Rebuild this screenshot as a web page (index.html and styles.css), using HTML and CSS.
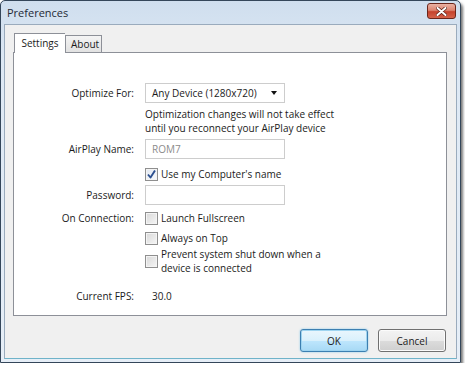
FILE: index.html
```html
<!DOCTYPE html>
<html>
  <head>
    <title>Preferences</title>
    <link rel="stylesheet" href="styles.css">
  </head>
  <body>
    <div class="window">
      <div class="titlebar">
        <span class="title">Preferences</span>
        <button class="close" title="Close">
          <svg width="11" height="9" viewBox="0 0 11 9">
            <path d="M1.5 1 L9.5 8 M9.5 1 L1.5 8" stroke="#5a1e14" stroke-width="3.4" stroke-linecap="round"/>
            <path d="M1.5 1 L9.5 8 M9.5 1 L1.5 8" stroke="#ffffff" stroke-width="2" stroke-linecap="round"/>
          </svg>
        </button>
      </div>

      <div class="client">
        <div class="tabs">
          <div class="tab active">Settings</div>
          <div class="tab">About</div>
        </div>

        <div class="panel">
          <div class="row r-select">
            <span class="label">Optimize For:</span>
            <div class="select">
              <span>Any Device (1280x720)</span>
              <span class="arrow"></span>
            </div>
          </div>

          <div class="row r-note">
            <span></span>
            <p class="note">Optimization changes will not take effect<br>until you reconnect your AirPlay device</p>
          </div>

          <div class="row r-name">
            <span class="label">AirPlay Name:</span>
            <div class="input disabled">ROM7</div>
          </div>

          <div class="row r-use">
            <span></span>
            <label class="check">
              <span class="box checked">
                <svg width="11" height="11" viewBox="0 0 11 11">
                  <path d="M2 5.5 L4.5 8.5 L9 1.5" fill="none" stroke="#2c4f8f" stroke-width="1.9" stroke-linejoin="round"/>
                </svg>
              </span>
              Use my Computer's name
            </label>
          </div>

          <div class="row r-pass">
            <span class="label">Password:</span>
            <div class="input"></div>
          </div>

          <div class="row r-conn">
            <span class="label">On Connection:</span>
            <label class="check"><span class="box"></span>Launch Fullscreen</label>
          </div>

          <div class="row r-top">
            <span></span>
            <label class="check"><span class="box"></span>Always on Top</label>
          </div>

          <div class="row r-prevent">
            <span></span>
            <label class="check"><span class="box"></span>Prevent system shut down when a<br>device is connected</label>
          </div>

          <div class="row r-fps">
            <span class="label">Current FPS:</span>
            <span class="value">30.0</span>
          </div>
        </div>

        <div class="actions">
          <button class="btn default">OK</button>
          <button class="btn">Cancel</button>
        </div>
      </div>
    </div>
  </body>
</html>
```

FILE: styles.css
```css
/* Page */
body {
  margin: 0;
  background-color: #ffffff;
  font-family: "Open Sans", "Noto Sans", sans-serif;
  font-size: 10px;
  color: #1b1b1b;
}

/* Window frame */
.window {
  box-sizing: border-box;
  width: 461px;
  height: 363px;
  border: 1px solid #34465a;
  border-radius: 5px 5px 0 0;
  padding: 0 3px 3px;
  background: linear-gradient(#cfdeee, #dde8f4 60px, #e6eef7);
  box-shadow: 2px 3px 3px rgba(0, 0, 0, 0.55);
  display: flex;
  flex-direction: column;
}

.titlebar {
  height: 23px;
  display: flex;
  align-items: center;
  justify-content: space-between;
  padding-left: 3px;
}

.title {
  font-size: 11px;
  color: #1f2a36;
}

.close {
  width: 29px;
  height: 16px;
  margin-top: -3px;
  margin-right: 1px;
  padding: 0;
  border: 1px solid #6b261b;
  border-radius: 3px;
  background: linear-gradient(#eab2a4, #dd8470 45%, #c5422c 55%, #d4624a);
  display: flex;
  align-items: center;
  justify-content: center;
}

/* Client area */
.client {
  flex: 1;
  background-color: #f0f0f0;
  border: 1px solid #9aabbd;
  border-bottom-color: #6fb3c9;
  padding: 8px 8px 0 8px;
  display: flex;
  flex-direction: column;
}

.tabs {
  display: flex;
  align-items: flex-end;
  padding-left: 1px;
  margin-bottom: -1px;
  position: relative;
  z-index: 1;
}

.tab {
  box-sizing: border-box;
  height: 17px;
  margin-bottom: 1px;
  padding: 0 5px;
  border: 1px solid #8d9098;
  border-bottom: none;
  background: linear-gradient(#f4f4f4, #e2e2e2);
  line-height: 16px;
  text-align: center;
}

.tab.active {
  height: 20px;
  width: 51px;
  margin-bottom: 0;
  border-right: none;
  background: #ffffff;
  line-height: 19px;
}

.tab + .tab {
  width: 37px;
}

.panel {
  box-sizing: border-box;
  width: 434px;
  height: 264px;
  border: 1px solid #8d9098;
  background-color: #ffffff;
  padding-top: 30px;
}

/* Form rows */
.row {
  display: grid;
  grid-template-columns: 120px 280px;
  column-gap: 11px;
  align-items: center;
}

.label {
  text-align: right;
}

.r-note { margin-top: 4px; }
.r-name { margin-top: 4px; }
.r-use { margin-top: 8px; }
.r-pass { margin-top: 4px; }
.r-conn { margin-top: 6px; }
.r-top { margin-top: 6px; }
.r-prevent { margin-top: 2px; }
.r-fps { margin-top: 14px; }

.select,
.input {
  box-sizing: border-box;
  width: 140px;
  height: 20px;
  border: 1px solid #cdcdcd;
  background-color: #ffffff;
  display: flex;
  align-items: center;
  padding-left: 6px;
}

.select {
  justify-content: space-between;
  padding-right: 7px;
}

.arrow {
  width: 0;
  height: 0;
  border-left: 3.5px solid transparent;
  border-right: 3.5px solid transparent;
  border-top: 4px solid #111111;
}

.input.disabled {
  color: #8c8c8c;
}

.note {
  margin: 0;
  line-height: 14px;
}

/* Checkboxes */
.check {
  display: flex;
  align-items: center;
  gap: 3px;
  line-height: 14px;
}

.box {
  box-sizing: border-box;
  flex: none;
  width: 13px;
  height: 13px;
  border: 1px solid #8f8f8f;
  background: linear-gradient(135deg, #d8d8d8, #f6f6f6);
  box-shadow: inset 0 0 0 1px #f4f4f4;
  display: flex;
  align-items: center;
  justify-content: center;
}

.box.checked {
  background: linear-gradient(135deg, #e2e8f2, #f8fafc);
}

.value {
  padding-left: 7px;
}

/* Dialog buttons */
.actions {
  display: flex;
  justify-content: flex-end;
  gap: 10px;
  margin-top: 13px;
  padding-right: 2px;
}

.btn {
  width: 68px;
  height: 23px;
  font-family: inherit;
  font-size: 10px;
  color: #1b1b1b;
  border: 1px solid #707070;
  border-radius: 3px;
  background: linear-gradient(#f3f3f3, #ebebeb 50%, #dcdcdc 51%, #cfcfcf);
  box-shadow: inset 0 0 0 1px #fbfbfb;
}

.btn.default {
  border-color: #3c7fb1;
  background: linear-gradient(#eaf6fd, #d9f0fc 50%, #bee6fd 51%, #a7d9f5);
  box-shadow: inset 0 0 0 1px #9ed4f0, 0 0 2px #7fc4e8;
}
```
